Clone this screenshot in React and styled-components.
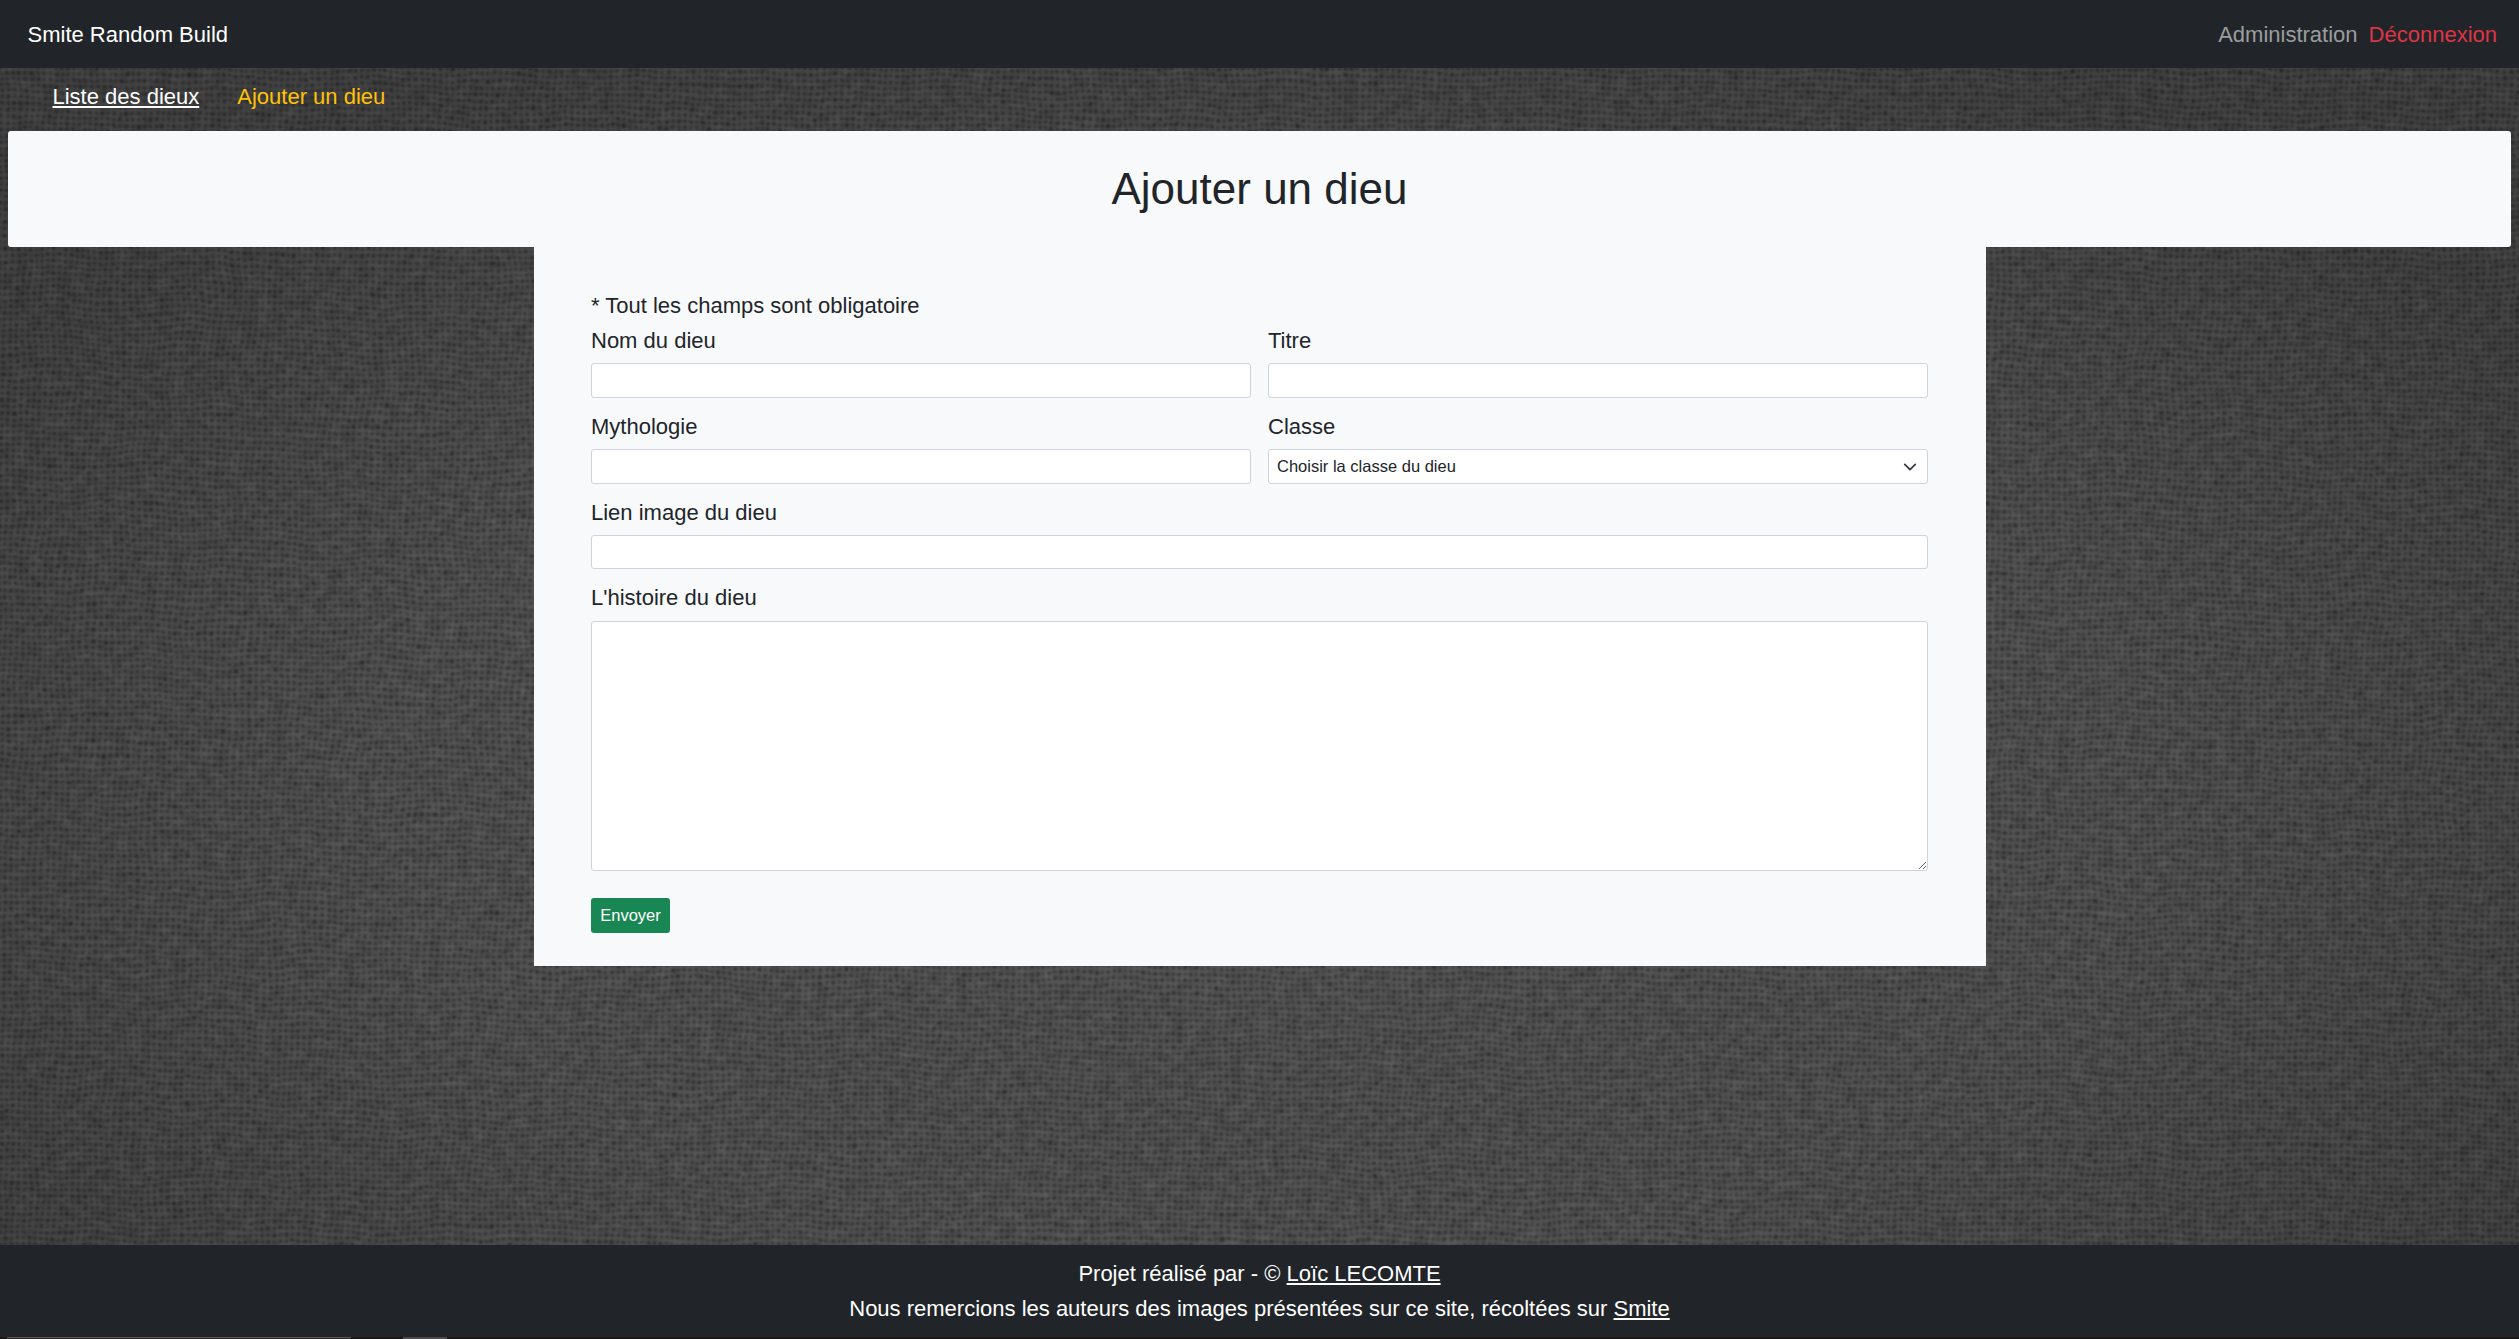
import React from "react";
import styled, { createGlobalStyle, css } from "styled-components";

const GlobalStyle = createGlobalStyle`
  *, *::before, *::after { box-sizing: border-box; }
  html, body { margin: 0; height: 100%; overflow: hidden; }
  body {
    font-family: "Liberation Sans", Arial, sans-serif;
    font-size: 22px;
    line-height: 35px;
    color: #212529;
    background: #484848;
  }
`;

const Page = styled.div`
  position: relative;
  isolation: isolate;
  display: flex;
  flex-direction: column;
  height: 1339px;
`;

const Backdrop = styled.svg`
  position: absolute;
  inset: 0;
  width: 100%;
  height: 100%;
  z-index: -1;
`;

const Navbar = styled.header`
  display: flex;
  align-items: center;
  justify-content: space-between;
  height: 68px;
  padding: 0 22px 0 27.5px;
  background: #212529;
`;

const Brand = styled.a`
  color: #fff;
`;

const NavLinks = styled.nav`
  display: flex;
  gap: 11px;
`;

const NavLink = styled.a`
  color: ${(p) => (p.$danger ? "#dc3545" : "#9b9d9e")};
`;

const SubNav = styled.nav`
  display: flex;
  gap: 38px;
  height: 63px;
  padding: 11px 52.5px 0;
`;

const SubLink = styled.a`
  ${(p) =>
    p.$active
      ? css`
          color: #ffc107;
        `
      : css`
          color: #fff;
          text-decoration: underline;
        `}
`;

const Banner = styled.div`
  display: flex;
  justify-content: center;
  height: 116px;
  margin: 0 8px;
  padding-top: 31px;
  border-radius: 3px;
  background: #f8f9fb;
`;

const Title = styled.h1`
  margin: 0;
  font-size: 44px;
  font-weight: 400;
  line-height: 53px;
`;

const Card = styled.main`
  width: 1452px;
  height: 719px;
  margin-left: 534px;
  padding: 41px 58px 0 57px;
  background: #f8f9fb;
`;

const Note = styled.p`
  margin: 0;
`;

const Form = styled.form`
  display: grid;
  grid-template-columns: 660px 660px;
  column-gap: 17px;
`;

const Field = styled.label`
  display: flex;
  flex-direction: column;
  height: ${(p) => p.$height || 86}px;
  gap: ${(p) => p.$gap || 5}px;
  grid-column: ${(p) => (p.$wide ? "1 / -1" : "auto")};
`;

const control = css`
  display: block;
  width: 100%;
  height: 35px;
  margin: 0;
  border: 1px solid #ced4da;
  border-radius: 3px;
  background: #fff;
  color: #212529;
  font: 16.5px/25px "Liberation Sans", Arial, sans-serif;
  outline: none;
`;

const Input = styled.input`
  ${control}
  height: ${(p) => p.$height || 35}px;
`;

const SelectBox = styled.div`
  ${control}
  display: flex;
  align-items: center;
  justify-content: space-between;
  padding: 0 10px 0 8px;
`;

const TextArea = styled.textarea`
  ${control}
  height: 250px;
  resize: vertical;
`;

const Submit = styled.button`
  width: 79px;
  height: 35px;
  padding: 0;
  border: 0;
  border-radius: 3px;
  background: #198754;
  color: #fff;
  font: 16.5px/25px "Liberation Sans", Arial, sans-serif;
`;

const Footer = styled.footer`
  margin-top: auto;
  height: 92px;
  padding-top: 11px;
  background: #212529;
  color: #fff;
  text-align: center;
`;

const FooterLine = styled.div`
  height: 35px;
`;

const FooterLink = styled.a`
  text-decoration: underline;
`;

const Edge = styled.div`
  display: flex;
  height: 2px;
  background: #1b1818;
  padding-left: 7px;
  gap: 52px;
`;

const EdgeItem = styled.div`
  width: ${(p) => p.$width}px;
  background: ${(p) => p.$color};
  border-top: 1px solid ${(p) => p.$line};
`;

function Texture() {
  return (
    <Backdrop aria-hidden="true">
      <defs>
        <pattern id="weave" width="12" height="12.6" patternUnits="userSpaceOnUse" patternTransform="rotate(1)">
          <rect width="12" height="12.6" fill="#535353" />
          <ellipse cx="3" cy="3" rx="2.1" ry="1.9" fill="#2f2f2f" />
          <ellipse cx="9" cy="3.3" rx="1.8" ry="1.8" fill="#353535" />
          <ellipse cx="3.1" cy="9.4" rx="1.8" ry="1.8" fill="#343434" />
          <ellipse cx="9.1" cy="9.6" rx="2.1" ry="1.9" fill="#2e2e2e" />
        </pattern>
        <filter id="cloth" x="0" y="0" width="100%" height="100%" colorInterpolationFilters="sRGB">
          <feTurbulence type="fractalNoise" baseFrequency="0.012" numOctaves="4" seed="4" result="warp" />
          <feDisplacementMap in="SourceGraphic" in2="warp" scale="11" xChannelSelector="R" yChannelSelector="G" result="cloth" />
          <feGaussianBlur in="cloth" stdDeviation="0.85" result="soft" />
          <feTurbulence type="fractalNoise" baseFrequency="0.07 0.1" numOctaves="3" seed="9" />
          <feColorMatrix type="matrix" values="0.5 0 0 0 0  0.5 0 0 0 0  0.5 0 0 0 0  0 0 0 0 1" result="grain" />
          <feComposite in="soft" in2="grain" operator="arithmetic" k1="0" k2="1" k3="0.2" k4="-0.05" />
        </filter>
        <radialGradient id="shade" cx="50%" cy="60%" r="62%">
          <stop offset="0" stopColor="#fff" stopOpacity="0.04" />
          <stop offset="0.55" stopColor="#000" stopOpacity="0" />
          <stop offset="1" stopColor="#000" stopOpacity="0.2" />
        </radialGradient>
      </defs>
      <rect x="-20" y="-20" width="2560" height="1380" fill="url(#weave)" filter="url(#cloth)" />
      <rect width="100%" height="100%" fill="url(#shade)" />
    </Backdrop>
  );
}

export default function App() {
  return (
    <>
      <GlobalStyle />
      <Page>
        <Texture />
        <Navbar>
          <Brand>Smite Random Build</Brand>
          <NavLinks>
            <NavLink>Administration</NavLink>
            <NavLink $danger>Déconnexion</NavLink>
          </NavLinks>
        </Navbar>
        <SubNav>
          <SubLink>Liste des dieux</SubLink>
          <SubLink $active>Ajouter un dieu</SubLink>
        </SubNav>
        <Banner>
          <Title>Ajouter un dieu</Title>
        </Banner>
        <Card>
          <Note>* Tout les champs sont obligatoire</Note>
          <Form>
            <Field>
              Nom du dieu
              <Input />
            </Field>
            <Field>
              Titre
              <Input />
            </Field>
            <Field>
              Mythologie
              <Input />
            </Field>
            <Field>
              Classe
              <SelectBox>
                Choisir la classe du dieu
                <svg width="14" height="14" viewBox="0 0 16 16" fill="none" stroke="#343a40" strokeWidth="2" strokeLinecap="round" strokeLinejoin="round">
                  <path d="M2 5l6 6 6-6" />
                </svg>
              </SelectBox>
            </Field>
            <Field $wide $height={85}>
              Lien image du dieu
              <Input $height={34} />
            </Field>
            <Field $wide $height={318} $gap={6}>
              L'histoire du dieu
              <TextArea />
            </Field>
            <Submit type="button">Envoyer</Submit>
          </Form>
        </Card>
        <Footer>
          <FooterLine>
            Projet réalisé par - © <FooterLink>Loïc LECOMTE</FooterLink>
          </FooterLine>
          <FooterLine>
            Nous remercions les auteurs des images présentées sur ce site, récoltées sur <FooterLink>Smite</FooterLink>
          </FooterLine>
        </Footer>
        <Edge>
          <EdgeItem $width={344} $color="#2c2929" $line="#5a5757" />
          <EdgeItem $width={44} $color="#4c4a4b" $line="#4c4a4b" />
        </Edge>
      </Page>
    </>
  );
}
